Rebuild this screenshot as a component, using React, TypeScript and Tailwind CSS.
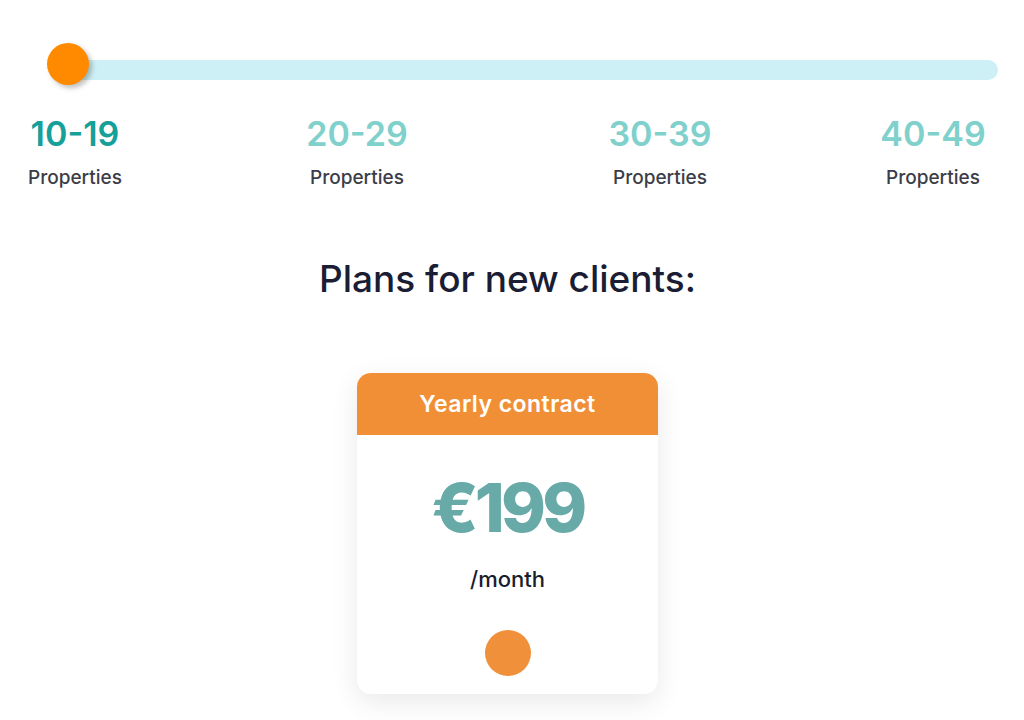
import React from "react";

const font = { fontFamily: 'Inter, "Open Sans", "Liberation Sans", sans-serif' };

export default function App() {
  const ranges = [
    { n: "10-19", active: true, ml: "ml-[20px]" },
    { n: "20-29", active: false, ml: "ml-[172px]" },
    { n: "30-39", active: false, ml: "ml-[193px]" },
    { n: "40-49", active: false, ml: "ml-[163px]" },
  ];
  return (
    <div className="w-[1024px] h-[720px] bg-white overflow-hidden" style={font}>
      {/* slider */}
      <div className="pt-[60px] pl-[62px] pr-[26px]">
        <div className="relative h-[20px] rounded-full bg-[#cdf0f6]">
          <div className="absolute left-[-15px] top-[-17px] w-[42px] h-[42px] rounded-full bg-[#ff8a00] shadow-[3px_3px_5px_rgba(0,0,0,0.25)]" />
        </div>
      </div>
      {/* labels */}
      <div className="flex mt-[37px]">
        {ranges.map((r) => (
          <div key={r.n} className={`${r.ml} w-[110px] flex flex-col items-center`}>
            <div
              className={`text-[34px] leading-none font-semibold ${r.active ? "text-[#15a09a]" : "text-[#80d0cc]"}`}
            >
              {r.n}
            </div>
            <div className="mt-[17px] text-[19px] leading-none font-medium text-[#3c3d48]">
              Properties
            </div>
          </div>
        ))}
      </div>
      {/* heading */}
      <h2 className="mt-[73px] text-center text-[37px] leading-none font-medium text-[#1a1d33] pr-[9px]">
        Plans for new clients:
      </h2>
      {/* card */}
      <div className="flex justify-center pr-[9px] mt-[76px]">
        <div className="w-[301px] rounded-[14px] bg-white shadow-[0_8px_28px_rgba(0,0,0,0.09)] overflow-hidden flex flex-col items-center pb-[18px]">
          <div className="w-full h-[62px] bg-[#f18f36] flex items-center justify-center text-white text-[23px] font-semibold tracking-[0.02em]">
            Yearly contract
          </div>
          <div className="mt-[38px] text-[68px] leading-none font-extrabold text-[#67aaa8] tracking-[-0.055em]">
            €199
          </div>
          <div className="mt-[27px] text-[22px] leading-none font-medium text-[#1a1d2e]">/month</div>
          <div className="mt-[40px] w-[46px] h-[46px] rounded-full bg-[#f0903a]" />
        </div>
      </div>
    </div>
  );
}
